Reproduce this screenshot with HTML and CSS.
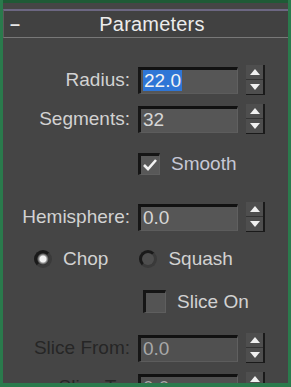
FILE: index.html
```html
<!DOCTYPE html>
<html lang="en">
<head>
    <meta charset="UTF-8">
    <title>Parameters</title>
    <link rel="stylesheet" href="styles.css">
</head>
<body>
    <div class="frame">
        <div class="rollout-head">
            <span class="collapse">&ndash;</span>
            <span class="title">Parameters</span>
        </div>

        <div class="field row-radius">
            <label class="lbl">Radius:</label>
            <div class="input"><span class="sel">22.0</span></div>
            <div class="spinner"><span class="up"></span><span class="down"></span></div>
        </div>
        <div class="field row-segs">
            <label class="lbl">Segments:</label>
            <div class="input">32</div>
            <div class="spinner"><span class="up"></span><span class="down"></span></div>
        </div>

        <div class="check row-smooth">
            <span class="box checked">
                <svg width="16" height="16" viewBox="0 0 16 16"><path d="M2 8 L6 12 L14 3" fill="none" stroke="#f2f2f2" stroke-width="2.6"/></svg>
            </span>
            <span>Smooth</span>
        </div>

        <div class="field row-hemi">
            <label class="lbl">Hemisphere:</label>
            <div class="input">0.0</div>
            <div class="spinner"><span class="up"></span><span class="down"></span></div>
        </div>

        <div class="radios">
            <div class="radio"><span class="dot on"></span><span>Chop</span></div>
            <div class="radio"><span class="dot"></span><span>Squash</span></div>
        </div>

        <div class="check row-slice">
            <span class="box"></span>
            <span>Slice On</span>
        </div>

        <div class="field row-from disabled">
            <label class="lbl">Slice From:</label>
            <div class="input">0.0</div>
            <div class="spinner"><span class="up"></span><span class="down"></span></div>
        </div>
        <div class="field row-to disabled">
            <label class="lbl">Slice To:</label>
            <div class="input">0.0</div>
            <div class="spinner"><span class="up"></span><span class="down"></span></div>
        </div>
    </div>
</body>
</html>
```

FILE: styles.css
```css
html, body {
    margin: 0;
    height: 100%;
    background: #2a7a4c;
}
body {
    font-family: "Liberation Sans", Arial, sans-serif;
    font-size: 19px;
    color: #d2d2d2;
}
.frame {
    box-sizing: border-box;
    height: 383px;
    margin: 0 3px 0 3px;
    border-top: 3px solid #1f5a36;
    background: #454545;
    overflow: hidden;
}
.rollout-head {
    margin-top: 6px;
    height: 26px;
    border-top: 2px solid #6c6782;
    border-bottom: 1px solid #787878;
    border-left: 1px solid #5a5a5a;
    background: #414141;
    display: flex;
    align-items: center;
}
.collapse {
    width: 24px;
    padding-left: 6px;
    font-size: 18px;
    font-weight: bold;
    color: #e8e8e8;
}
.title {
    flex: 1;
    text-align: center;
    padding-right: 18px;
    font-size: 20px;
    color: #ececec;
    letter-spacing: 0.2px;
}
.field {
    display: grid;
    grid-template-columns: 127px 100px 19px;
    column-gap: 8px;
    align-items: center;
    height: 27px;
}
.lbl {
    text-align: right;
    white-space: nowrap;
}
.input {
    box-sizing: border-box;
    height: 27px;
    background: #565656;
    border-top: 3px solid #111;
    border-left: 3px solid #161616;
    border-right: 1px solid #606060;
    border-bottom: 1px solid #5c5c5c;
    padding-left: 2px;
    line-height: 22px;
    color: #d6d6d6;
}
.sel {
    background: #2f76d6;
    color: #f4f4f4;
    padding: 0 1px;
    display: inline-block;
    line-height: 21px;
}
.spinner {
    box-sizing: border-box;
    height: 30px;
    background: #4e4e4e;
    border-right: 2px solid #1a1a1a;
    border-bottom: 1px solid #1a1a1a;
    display: flex;
    flex-direction: column;
}
.spinner span {
    flex: 1;
    display: flex;
    align-items: center;
    justify-content: center;
}
.spinner .down {
    border-top: 1px solid #333;
}
.spinner .up::after {
    content: "";
    border-left: 5px solid transparent;
    border-right: 5px solid transparent;
    border-bottom: 6px solid #f0f0f0;
}
.spinner .down::after {
    content: "";
    border-left: 5px solid transparent;
    border-right: 5px solid transparent;
    border-top: 6px solid #f0f0f0;
}
.row-radius { margin-top: 27px; }
.row-segs { margin-top: 12px; }
.check {
    display: flex;
    align-items: center;
    gap: 11px;
}
.box {
    box-sizing: border-box;
    width: 22px;
    height: 22px;
    background: #585858;
    border-top: 3px solid #151515;
    border-left: 3px solid #151515;
    border-right: 1px solid #5e5e5e;
    border-bottom: 1px solid #5e5e5e;
    display: flex;
    align-items: center;
    justify-content: center;
}
.row-smooth {
    margin-top: 22px;
    padding-left: 135px;
    color: #c6c8d6;
}
.row-hemi { margin-top: 27px; }
.radios {
    margin-top: 21px;
    height: 18px;
    display: flex;
    padding-left: 31px;
}
.radio {
    display: flex;
    align-items: center;
    gap: 11px;
}
.radio + .radio {
    margin-left: 31px;
}
.dot {
    box-sizing: border-box;
    width: 18px;
    height: 18px;
    border-radius: 50%;
    background: #4e4e4e;
    border: 3px solid #1a1a1a;
    border-bottom-color: #3a3a3a;
    border-right-color: #3a3a3a;
}
.dot.on {
    background: radial-gradient(circle, #f2f2f2 0 3px, #9a9a9a 4px, #2a2a2a 6px);
}
.row-slice {
    margin-top: 22px;
    padding-left: 140px;
}
.row-slice .box {
    width: 23px;
    height: 23px;
    background: #545454;
}
.row-from { margin-top: 20px; }
.row-to { margin-top: 12px; }
.disabled .lbl {
    color: #262626;
}
.disabled .input {
    background: #505050;
    color: #a8a8a8;
}
```
